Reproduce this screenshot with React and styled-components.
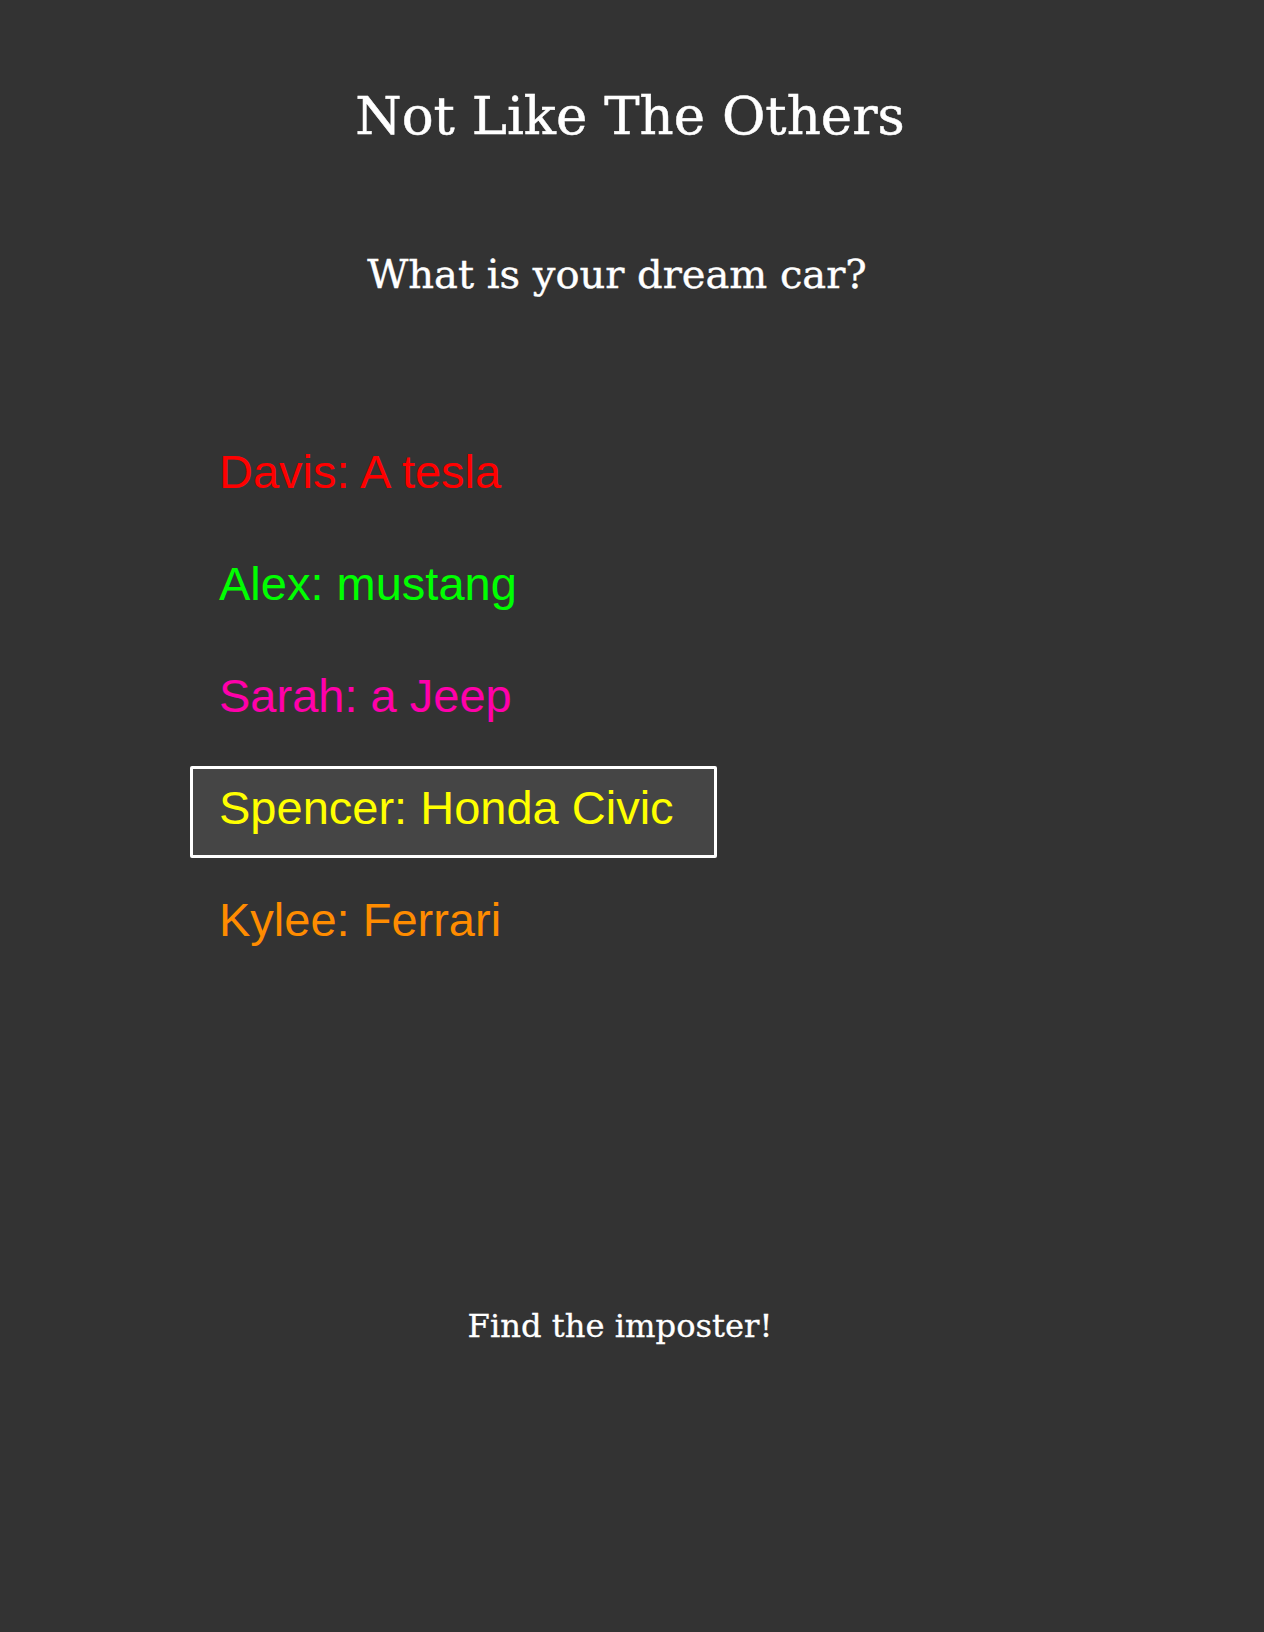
import React from "react";
import styled, { createGlobalStyle } from "styled-components";

const GlobalStyle = createGlobalStyle`
  html, body {
    margin: 0;
    padding: 0;
    background-color: #333333;
  }
  body {
    min-height: 1632px;
    font-family: "DejaVu Serif", "Liberation Serif", serif;
    color: #fff;
  }
`;

const answers = [
  { name: "Davis", answer: "A tesla", color: "#ff0000" },
  { name: "Alex", answer: "mustang", color: "#00ff00" },
  { name: "Sarah", answer: "a Jeep", color: "#ff00aa" },
  { name: "Spencer", answer: "Honda Civic", color: "#ffff00", selected: true },
  { name: "Kylee", answer: "Ferrari", color: "#ff8c00" },
];

const App = () => {
  return (
    <StPage>
      <GlobalStyle />
      <Title>Not Like The Others</Title>
      <Question>What is your dream car?</Question>
      <AnswerList>
        {answers.map((a) => (
          <Answer key={a.name} $color={a.color} $selected={a.selected}>
            {a.name}: {a.answer}
          </Answer>
        ))}
      </AnswerList>
      <Hint>Find the imposter!</Hint>
    </StPage>
  );
};

export default App;

const StPage = styled.main`
  width: 1240px;
  display: flex;
  flex-direction: column;
  align-items: center;
`;

const Title = styled.h1`
  margin: 89px 0 0;
  padding-left: 20px;
  font-size: 53px;
  line-height: 53px;
  font-weight: normal;
  -webkit-text-stroke: 0.5px #fff;
`;

const Question = styled.h2`
  margin: 112px 0 0;
  padding-right: 6px;
  font-size: 40px;
  line-height: 40px;
  font-weight: normal;
  -webkit-text-stroke: 0.4px #fff;
`;

const AnswerList = styled.ul`
  list-style: none;
  margin: 136px 0 0;
  padding: 0 0 0 190px;
  align-self: stretch;
  display: flex;
  flex-direction: column;
  gap: 20px;
`;

const Answer = styled.li`
  box-sizing: border-box;
  width: 527px;
  height: 92px;
  padding: 0 0 8px 26px;
  font-family: "Liberation Sans", Arial, sans-serif;
  font-size: 47px;
  line-height: 78px;
  color: ${(p) => p.$color};
  border: 3px solid ${(p) => (p.$selected ? "#ffffff" : "transparent")};
  border-radius: 2px;
  background-color: ${(p) => (p.$selected ? "#454545" : "transparent")};
  white-space: nowrap;
  cursor: pointer;
`;

const Hint = styled.p`
  margin: 340px 0 0;
  font-size: 32.2px;
  line-height: 32px;
  -webkit-text-stroke: 0.3px #fff;
`;
